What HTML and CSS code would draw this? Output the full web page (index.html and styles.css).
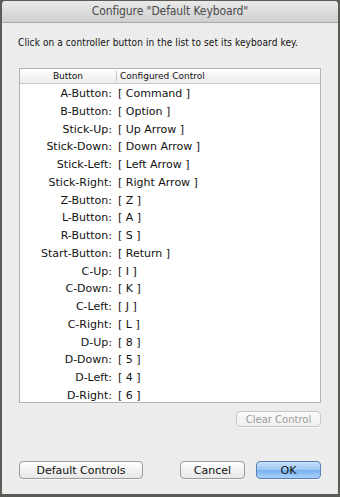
FILE: index.html
```html
<!DOCTYPE html>
<html lang="en">

<head>
    <meta charset="UTF-8">
    <meta name="viewport" content="width=device-width, initial-scale=1.0">
    <title>Configure "Default Keyboard"</title>
    <link rel="stylesheet" href="styles.css">
</head>

<body>
    <div class="window">
        <div class="titlebar">Configure "Default Keyboard"</div>

        <div class="content">
            <p class="hint">Click on a controller button in the list to set its keyboard key.</p>

            <div class="list">
                <div class="list-head">
                    <div class="col-name">Button</div>
                    <div class="col-value">Configured Control</div>
                </div>
                <div class="list-rows">
                    <div class="row"><span class="name">A-Button:</span><span class="value">[ Command ]</span></div>
                    <div class="row"><span class="name">B-Button:</span><span class="value">[ Option ]</span></div>
                    <div class="row"><span class="name">Stick-Up:</span><span class="value">[ Up Arrow ]</span></div>
                    <div class="row"><span class="name">Stick-Down:</span><span class="value">[ Down Arrow ]</span></div>
                    <div class="row"><span class="name">Stick-Left:</span><span class="value">[ Left Arrow ]</span></div>
                    <div class="row"><span class="name">Stick-Right:</span><span class="value">[ Right Arrow ]</span></div>
                    <div class="row"><span class="name">Z-Button:</span><span class="value">[ Z ]</span></div>
                    <div class="row"><span class="name">L-Button:</span><span class="value">[ A ]</span></div>
                    <div class="row"><span class="name">R-Button:</span><span class="value">[ S ]</span></div>
                    <div class="row"><span class="name">Start-Button:</span><span class="value">[ Return ]</span></div>
                    <div class="row"><span class="name">C-Up:</span><span class="value">[ I ]</span></div>
                    <div class="row"><span class="name">C-Down:</span><span class="value">[ K ]</span></div>
                    <div class="row"><span class="name">C-Left:</span><span class="value">[ J ]</span></div>
                    <div class="row"><span class="name">C-Right:</span><span class="value">[ L ]</span></div>
                    <div class="row"><span class="name">D-Up:</span><span class="value">[ 8 ]</span></div>
                    <div class="row"><span class="name">D-Down:</span><span class="value">[ 5 ]</span></div>
                    <div class="row"><span class="name">D-Left:</span><span class="value">[ 4 ]</span></div>
                    <div class="row"><span class="name">D-Right:</span><span class="value">[ 6 ]</span></div>
                </div>
            </div>

            <div class="clear-row">
                <button type="button" class="btn btn-clear" disabled>Clear Control</button>
            </div>

            <div class="footer">
                <button type="button" class="btn btn-defaults">Default Controls</button>
                <div class="footer-right">
                    <button type="button" class="btn btn-cancel">Cancel</button>
                    <button type="button" class="btn btn-ok">OK</button>
                </div>
            </div>
        </div>
    </div>
</body>

</html>
```

FILE: styles.css
```css
html,
body {
    margin: 0;
    height: 100%;
    background-color: #5b5a55;
}

body {
    font-family: "DejaVu Sans", "Liberation Sans", sans-serif;
    color: #111;
}

.window {
    box-sizing: border-box;
    height: 497px;
    border: 2px solid #5b5a55;
    border-top-width: 1px;
    border-bottom-width: 3px;
    border-radius: 5px 5px 0 0;
    background-color: #ececec;
    display: flex;
    flex-direction: column;
    overflow: hidden;
}

.titlebar {
    height: 21px;
    line-height: 21px;
    text-align: center;
    font-family: "DejaVu Sans Condensed", "DejaVu Sans", sans-serif;
    font-size: 12px;
    letter-spacing: -0.1px;
    color: #4a4a4a;
    background: linear-gradient(#e9e9e9, #cfcfcf);
    border-bottom: 1px solid #a9a9a9;
    border-radius: 4px 4px 0 0;
}

.content {
    flex: 1;
    display: flex;
    flex-direction: column;
    padding: 0 17px;
}

.hint {
    margin: 13px 0 0 -1px;
    font-family: "DejaVu Sans Condensed", "DejaVu Sans", sans-serif;
    font-size: 10px;
    letter-spacing: 0.1px;
    line-height: 13px;
    white-space: nowrap;
}

.list {
    margin-top: 19px;
    height: 335px;
    box-sizing: border-box;
    border: 1px solid #b4b4b4;
    background-color: #ffffff;
}

.list-head {
    display: flex;
    height: 14px;
    line-height: 14px;
    font-size: 9px;
    background: linear-gradient(#ffffff, #ececec);
    border-bottom: 1px solid #cacaca;
}

.col-name {
    width: 96px;
    text-align: center;
    border-right: 1px solid #c6c6c6;
    margin: 2px 0;
    line-height: 10px;
}

.col-value {
    padding-left: 3px;
}

.list-rows {
    padding-top: 1px;
}

.row {
    display: flex;
    height: 17.75px;
    line-height: 17.75px;
    font-size: 11px;
}

.name {
    width: 92px;
    text-align: right;
}

.value {
    padding-left: 6px;
}

.clear-row {
    display: flex;
    justify-content: flex-end;
    margin-top: 8px;
}

.btn {
    font-family: "DejaVu Sans", "Liberation Sans", sans-serif;
    font-size: 11px;
    color: #111;
    height: 18px;
    padding: 0;
    border: 1px solid #9c9c9c;
    border-radius: 4px;
    background: linear-gradient(#ffffff, #f1f1f1 50%, #e8e8e8);
    box-shadow: 0 1px 0 rgba(255, 255, 255, 0.6);
}

.btn-clear {
    width: 85px;
    height: 16px;
    font-size: 10px;
    color: #9c9c9c;
    border-color: #c6c6c6;
    background: linear-gradient(#fafafa, #f0f0f0);
}

.footer {
    display: flex;
    justify-content: space-between;
    margin-top: 34px;
}

.footer-right {
    display: flex;
    gap: 11px;
}

.btn-defaults {
    width: 124px;
}

.btn-cancel {
    width: 65px;
}

.btn-ok {
    width: 65px;
    border-color: #5b7fb4;
    background: linear-gradient(#c9e1f9, #9cc6f2 50%, #79b0ee 51%, #a9d1fa);
}
```
